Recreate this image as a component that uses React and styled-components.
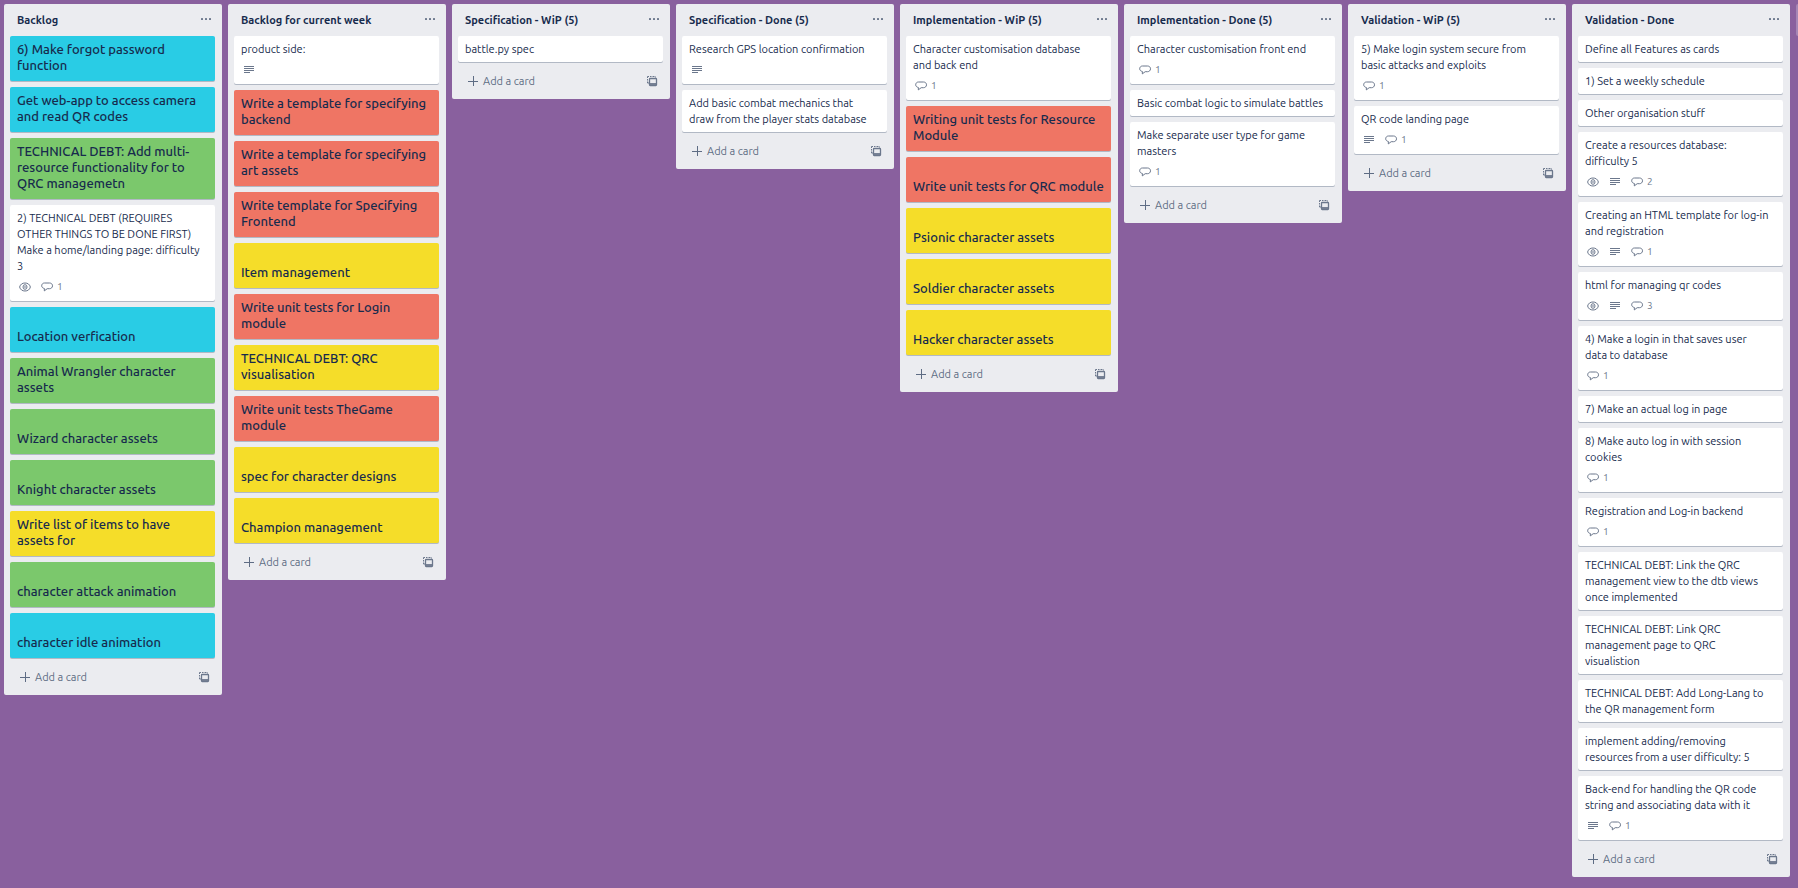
import React from "react";
import styled, { createGlobalStyle } from "styled-components";

const GlobalStyle = createGlobalStyle`
  *, *::before, *::after { box-sizing: border-box; }
  body {
    margin: 0;
    background: #89609e;
    color: #172b4d;
    font: 400 11px/16px Ubuntu, "Open Sans", "Noto Sans", sans-serif;
  }
  button { font: inherit; color: inherit; border: 0; background: none; padding: 0; cursor: pointer; }
`;

const COVERS = {
  sky: "#29cce5",
  green: "#7bc86c",
  yellow: "#f5dd29",
  red: "#ef7564",
};

const Board = styled.main`
  display: flex;
  align-items: flex-start;
  gap: 6px;
  min-height: 100vh;
  padding: 4px;
  overflow: hidden;
`;

const List = styled.section`
  flex: 0 0 218px;
  background: #ebecf0;
  border-radius: 2px;
`;

const ListHeader = styled.header`
  display: flex;
  align-items: center;
  justify-content: space-between;
  height: 32px;
  padding: 0 10px 0 13px;
`;

const ListTitle = styled.h2`
  margin: 0;
  font-size: 11px;
  font-weight: 700;
`;

const IconButton = styled.button`
  display: flex;
  color: #6b778c;
`;

const Cards = styled.ul`
  display: flex;
  flex-direction: column;
  gap: 6px;
  margin: 0;
  padding: 0 7px 0 6px;
  list-style: none;
`;

const Card = styled.li`
  padding: 5px 7px;
  border-radius: 2px;
  background: #fff;
  box-shadow: 0 1px 0 rgba(9, 30, 66, 0.25);
  overflow-wrap: break-word;
  white-space: pre-line;
`;

const CoverCard = styled(Card)`
  display: flex;
  align-items: flex-end;
  min-height: 45px;
  padding-bottom: 8px;
  background: ${(p) => COVERS[p.$cover]};
  font-size: 13px;
  font-weight: 500;
`;

const Badges = styled.div`
  display: flex;
  gap: 6px;
  padding-top: 4px;
  color: #6b778c;
`;

const Badge = styled.span`
  display: flex;
  align-items: center;
  gap: 2px;
  height: 18px;
  font-size: 10px;
`;

const BadgeIcon = styled.svg`
  width: 16px;
  height: 12px;
`;

const Icon = styled.svg`
  display: block;
  width: 12px;
  height: 12px;
`;

const ListFooter = styled.footer`
  display: flex;
  align-items: center;
  justify-content: space-between;
  height: 37px;
  padding: 0 12px 0 15px;
`;

const AddCard = styled.button`
  display: flex;
  align-items: center;
  gap: 4px;
  color: #5e6c84;
`;

const AddList = styled.button`
  flex: 0 0 218px;
  height: 32px;
  border-radius: 2px;
  background: rgba(255, 255, 255, 0.24);
`;

const DotsIcon = () => (
  <Icon viewBox="0 0 12 12" fill="currentColor" aria-hidden="true">
    <rect x="1" y="4" width="2" height="2" rx=".5" />
    <rect x="5" y="4" width="2" height="2" rx=".5" />
    <rect x="9" y="4" width="2" height="2" rx=".5" />
  </Icon>
);

const PlusIcon = () => (
  <Icon viewBox="0 0 12 12" stroke="currentColor" strokeWidth="1" aria-hidden="true">
    <path d="M6.5 1v10M1 6.5h10" />
  </Icon>
);

const TemplateIcon = () => (
  <Icon viewBox="0 0 12 12" fill="none" stroke="currentColor" aria-hidden="true">
    <path d="M3 1.5H1.5V3M1.5 4v1.5M1.5 6.5v1.5H3M4 1.5h1.5M6.5 1.5h2M9.5 1.5v1" />
    <rect x="3.5" y="3.5" width="7" height="7" rx=".7" strokeWidth="1.3" />
    <path d="M3.5 9h7" strokeWidth="1.8" />
  </Icon>
);

const badgeShapes = {
  watch: (
    <>
      <path d="M2.600 6C3.400 3.200 5.400 2 8 2s4.600 1.200 5.400 4C12.600 8.800 10.600 10 8 10S3.400 8.800 2.600 6z" />
      <ellipse cx="8" cy="6" rx="2" ry="2.300" />
      <circle cx="8" cy="6" r=".4" />
    </>
  ),
  text: <path d="M3 2.500h10M3 4.500h10M3 6.500h10M3 8.500h6" />,
  comment: (
    <path d="M5.500 2h5c1.700 0 3 1.100 3 2.800s-1.300 2.900-3 2.900H8.200L5.300 9.900l.1-2.400C3.900 7.200 2.700 6.300 2.700 4.800 2.700 3.100 3.900 2 5.500 2z" strokeLinejoin="round" />
  ),
};

const badgeLabels = {
  watch: "You are watching this card",
  text: "This card has a description",
  comment: "Comments",
};

const CardBadge = ({ kind, count }) => (
  <Badge title={badgeLabels[kind]}>
    <BadgeIcon viewBox="0 0 16 12" fill="none" stroke="currentColor" aria-hidden="true">
      {badgeShapes[kind]}
    </BadgeIcon>
    {count}
  </Badge>
);

const plain = (title, badges = {}) => ({ title, ...badges });
const cover = (color, title) => ({ title, cover: color });

const LISTS = [
  {
    title: "Backlog",
    cards: [
      cover("sky", "6) Make forgot password function"),
      cover("sky", "Get web-app to access camera and read QR codes"),
      cover("green", "TECHNICAL DEBT: Add multi-resource functionality for to QRC managemetn"),
      plain("2) TECHNICAL DEBT (REQUIRES OTHER THINGS TO BE DONE FIRST) Make a home/landing page: difficulty 3", { watch: true, comments: 1 }),
      cover("sky", "Location verfication"),
      cover("green", "Animal Wrangler character assets"),
      cover("green", "Wizard character assets"),
      cover("green", "Knight character assets"),
      cover("yellow", "Write list of items to have assets for"),
      cover("green", "character attack animation"),
      cover("sky", "character idle animation"),
    ],
  },
  {
    title: "Backlog for current week",
    cards: [
      plain("product side:", { text: true }),
      cover("red", "Write a template for specifying backend"),
      cover("red", "Write a template for specifying art assets"),
      cover("red", "Write template for Specifying Frontend"),
      cover("yellow", "Item management"),
      cover("red", "Write unit tests for Login module"),
      cover("yellow", "TECHNICAL DEBT: QRC visualisation"),
      cover("red", "Write unit tests TheGame module"),
      cover("yellow", "spec for character designs"),
      cover("yellow", "Champion management"),
    ],
  },
  { title: "Specification - WiP (5)", cards: [plain("battle.py spec")] },
  {
    title: "Specification - Done (5)",
    cards: [
      plain("Research GPS location confirmation", { text: true }),
      plain("Add basic combat mechanics that draw from the player stats database"),
    ],
  },
  {
    title: "Implementation - WiP (5)",
    cards: [
      plain("Character customisation database\nand back end", { comments: 1 }),
      cover("red", "Writing unit tests for Resource Module"),
      cover("red", "Write unit tests for QRC module"),
      cover("yellow", "Psionic character assets"),
      cover("yellow", "Soldier character assets"),
      cover("yellow", "Hacker character assets"),
    ],
  },
  {
    title: "Implementation - Done (5)",
    cards: [
      plain("Character customisation front end", { comments: 1 }),
      plain("Basic combat logic to simulate battles"),
      plain("Make separate user type for game masters", { comments: 1 }),
    ],
  },
  {
    title: "Validation - WiP (5)",
    cards: [
      plain("5) Make login system secure from basic attacks and exploits", { comments: 1 }),
      plain("QR code landing page", { text: true, comments: 1 }),
    ],
  },
  {
    title: "Validation - Done",
    cards: [
      plain("Define all Features as cards"),
      plain("1) Set a weekly schedule"),
      plain("Other organisation stuff"),
      plain("Create a resources database:\ndifficulty 5", { watch: true, text: true, comments: 2 }),
      plain("Creating an HTML template for log-in and registration", { watch: true, text: true, comments: 1 }),
      plain("html for managing qr codes", { watch: true, text: true, comments: 3 }),
      plain("4) Make a login in that saves user\ndata to database", { comments: 1 }),
      plain("7) Make an actual log in page"),
      plain("8) Make auto log in with session cookies", { comments: 1 }),
      plain("Registration and Log-in backend", { comments: 1 }),
      plain("TECHNICAL DEBT: Link the QRC management view to the dtb views once implemented"),
      plain("TECHNICAL DEBT: Link QRC management page to QRC\nvisualistion"),
      plain("TECHNICAL DEBT: Add Long-Lang to the QR management form"),
      plain("implement adding/removing resources from a user difficulty: 5"),
      plain("Back-end for handling the QR code string and associating data with it", { text: true, comments: 1 }),
    ],
  },
];

const BoardCard = ({ card }) => {
  if (card.cover) return <CoverCard $cover={card.cover}>{card.title}</CoverCard>;
  const hasBadges = card.watch || card.text || card.comments;
  return (
    <Card>
      {card.title}
      {hasBadges && (
        <Badges>
          {card.watch && <CardBadge kind="watch" />}
          {card.text && <CardBadge kind="text" />}
          {card.comments && <CardBadge kind="comment" count={card.comments} />}
        </Badges>
      )}
    </Card>
  );
};

export default function App() {
  return (
    <>
      <GlobalStyle />
      <Board>
        {LISTS.map((list) => (
          <List key={list.title}>
            <ListHeader>
              <ListTitle>{list.title}</ListTitle>
              <IconButton aria-label="List actions">
                <DotsIcon />
              </IconButton>
            </ListHeader>
            <Cards>
              {list.cards.map((card) => (
                <BoardCard key={card.title} card={card} />
              ))}
            </Cards>
            <ListFooter>
              <AddCard>
                <PlusIcon />
                Add a card
              </AddCard>
              <IconButton aria-label="Create from template">
                <TemplateIcon />
              </IconButton>
            </ListFooter>
          </List>
        ))}
        <AddList aria-label="Add another list" />
      </Board>
    </>
  );
}
